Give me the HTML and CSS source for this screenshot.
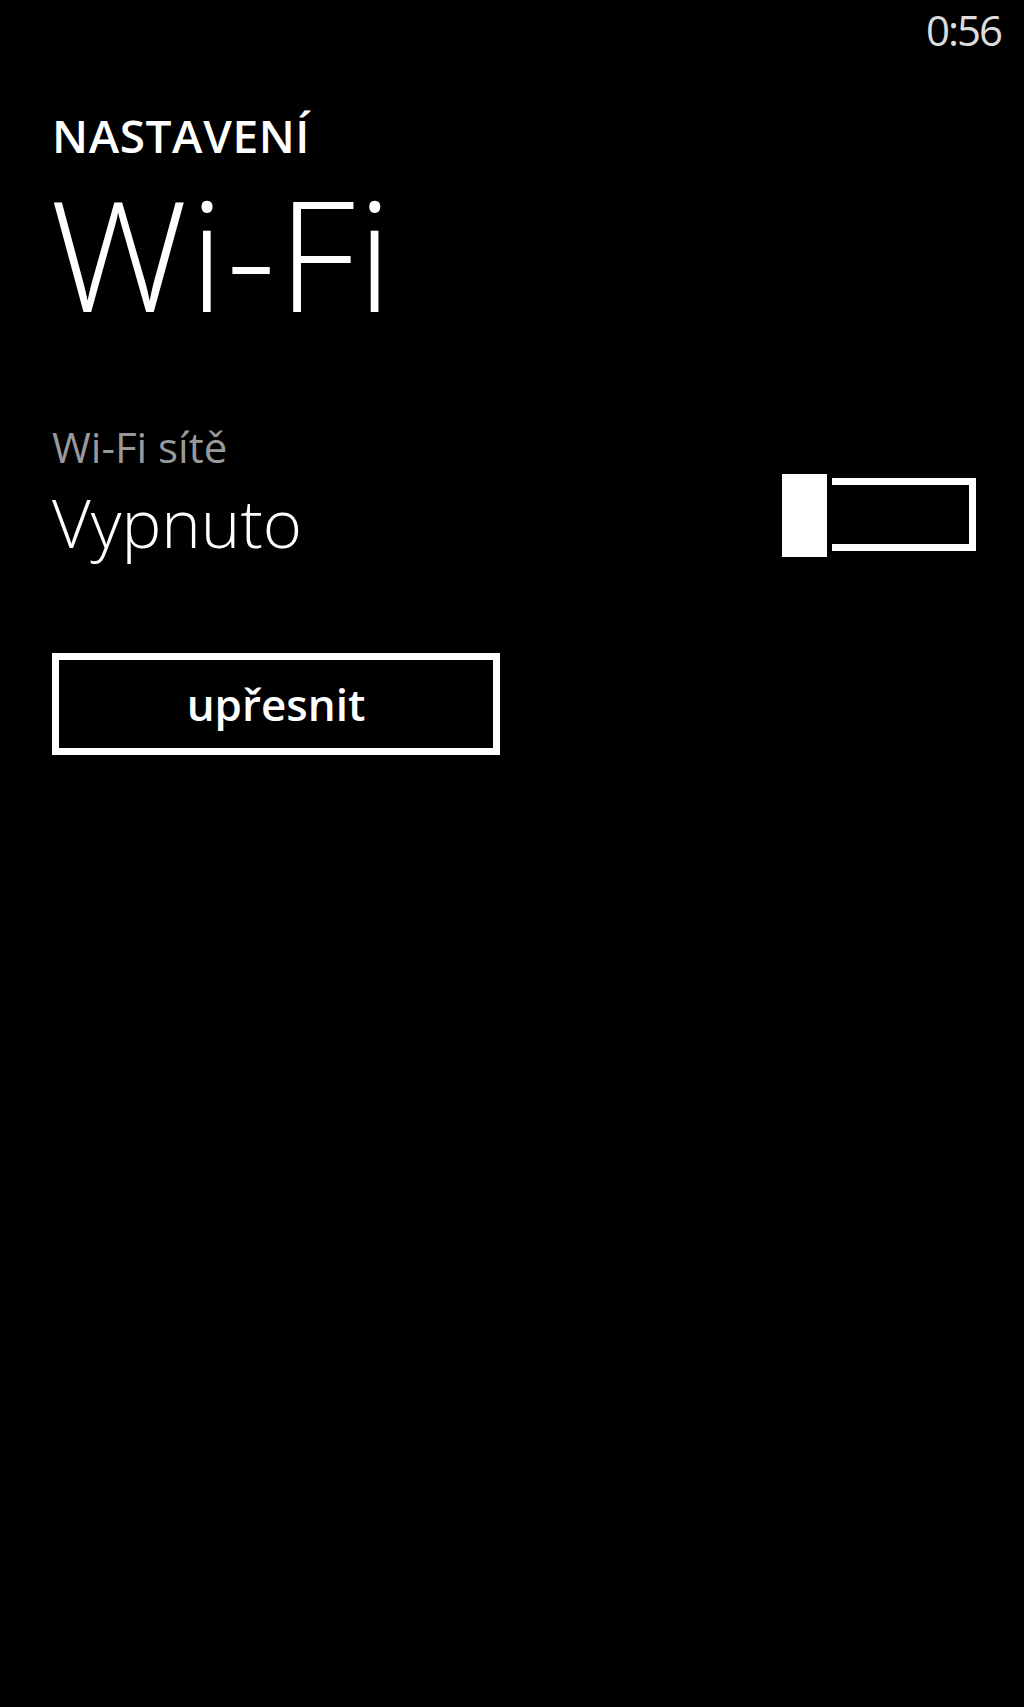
FILE: index.html
```html
<!DOCTYPE html>
<html lang="cs">
<head>
<meta charset="utf-8">
<title>Wi-Fi</title>
<link rel="stylesheet" href="styles.css">
</head>
<body>
  <div class="statusbar"><span class="clock">0:56</span></div>
  <main class="page">
    <div class="app-title">NASTAVENÍ</div>
    <h1 class="page-title">Wi-Fi</h1>
    <div class="label">Wi-Fi sítě</div>
    <div class="toggle-row">
      <div class="toggle-value">Vypnuto</div>
      <div class="toggle" role="switch" aria-checked="false">
        <div class="track"></div>
        <div class="thumb"></div>
      </div>
    </div>
    <button class="btn">upřesnit</button>
  </main>
</body>
</html>
```

FILE: styles.css
```css
html, body {
  margin: 0;
  padding: 0;
  background: #000;
}
body {
  width: 1024px;
  height: 1707px;
  color: #fff;
  font-family: "Open Sans", "DejaVu Sans", sans-serif;
  overflow: hidden;
}
.statusbar {
  display: flex;
  justify-content: flex-end;
  padding: 9px 23px 0 0;
}
.clock {
  font-size: 42px;
  line-height: 42px;
  font-weight: 400;
  color: #dcdcdc;
  letter-spacing: -2px;
}
.page {
  padding: 0 48px 0 52px;
}
.app-title {
  margin-top: 61px;
  font-size: 46px;
  line-height: 46px;
  font-weight: 600;
  letter-spacing: 0.6px;
}
.page-title {
  margin: 17px 0 0 -2px;
  font-size: 154px;
  line-height: 154px;
  font-weight: 300;
  letter-spacing: 2px;
}
.label {
  margin-top: 97px;
  font-size: 42px;
  line-height: 42px;
  color: #999;
}
.toggle-row {
  margin-top: 6px;
  display: flex;
  justify-content: space-between;
  align-items: flex-end;
}
.toggle-value {
  font-size: 67px;
  line-height: 67px;
  font-weight: 300;
  margin-bottom: 1px;
}
.toggle {
  position: relative;
  width: 194px;
  height: 83px;
}
.track {
  margin-top: 4px;
  height: 73px;
  border: 7px solid #fff;
  box-sizing: border-box;
}
.thumb {
  position: absolute;
  left: 0;
  top: 0;
  width: 45px;
  height: 83px;
  background: #fff;
  box-shadow: 0 0 0 5px #000;
}
.btn {
  display: block;
  margin-top: 96px;
  width: 448px;
  height: 102px;
  box-sizing: border-box;
  border: 7px solid #fff;
  background: #000;
  color: #fff;
  font-family: "Open Sans", "DejaVu Sans", sans-serif;
  font-size: 44px;
  line-height: 44px;
  font-weight: 600;
  padding: 0;
}
```
